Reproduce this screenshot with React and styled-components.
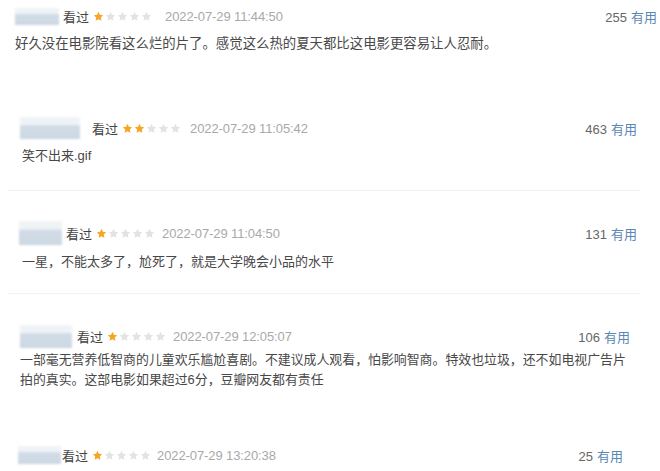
import styled, { createGlobalStyle } from "styled-components";

const GlobalStyle = createGlobalStyle`
  html, body {
    margin: 0;
    padding: 0;
    background: #fff;
  }
  body {
    font-family: "Liberation Sans", "Noto Sans CJK SC", sans-serif;
    width: 660px;
    height: 471px;
    overflow: hidden;
  }
`;

const List = styled.div`
  display: flex;
  flex-direction: column;
  width: 660px;
`;

const Card = styled.div`
  padding: ${(p) => p.$top}px ${(p) => p.$right}px ${(p) => p.$bottom}px ${(p) => p.$left}px;
  margin: 0 ${(p) => (p.$divider ? 20 : 0)}px 0 ${(p) => (p.$divider ? 8 : 0)}px;
  border-bottom: ${(p) => (p.$divider ? "1px solid #f2f3f4" : "none")};
`;

const Header = styled.div`
  display: flex;
  align-items: center;
  height: 20px;
  font-size: 13px;
`;

const Meta = styled.div`
  display: flex;
  align-items: center;
  flex: 1;
`;

// blurred-out user name
const NameBlur = styled.div`
  width: ${(p) => p.$w}px;
  height: ${(p) => p.$h}px;
  margin-right: ${(p) => p.$gap}px;
  background: linear-gradient(180deg, #eef2f6 0%, #eef2f6 35%, #cfdae5 36%, #c6d3e0 100%);
  filter: blur(1.2px);
  opacity: 0.9;
`;

const Watched = styled.span`
  color: #444;
  margin-right: 4px;
`;

const Stars = styled.span`
  display: inline-flex;
  gap: 1px;
  margin-right: ${(p) => p.$gap}px;
`;

const DateText = styled.span`
  color: #a9a9a9;
  letter-spacing: -0.1px;
`;

const Votes = styled.div`
  color: #666;
  white-space: nowrap;
`;

const Useful = styled.span`
  color: #5a87b4;
  margin-left: 4px;
`;

const Body = styled.p`
  margin: ${(p) => p.$gap}px 0 0 ${(p) => p.$indent}px;
  font-size: ${(p) => p.$size}px;
  line-height: 20px;
  color: #484848;
  white-space: nowrap;
`;

const Star = ({ on }) => (
  <svg width="11" height="11" viewBox="0 0 24 24">
    <path
      d="M12 1.8l3.1 6.6 7.1.9-5.2 4.9 1.3 7.1L12 17.8l-6.3 3.5 1.3-7.1-5.2-4.9 7.1-.9z"
      fill={on ? "#f5a623" : "#e3e3e3"}
    />
  </svg>
);

const reviews = [
  {
    left: 15, right: 3, top: 6, bottom: 0, gap: 8, indent: 0, size: 13.4,
    blur: { w: 44, h: 17, gap: 4 }, starGap: 13, rating: 1,
    date: "2022-07-29 11:44:50", votes: 255,
    lines: ["好久没在电影院看这么烂的片了。感觉这么热的夏天都比这电影更容易让人忍耐。"],
  },
  {
    left: 12, right: 3, top: 64, bottom: 24, gap: 8, indent: 2, size: 13, divider: true,
    blur: { w: 60, h: 22, gap: 12 }, starGap: 9, rating: 2,
    date: "2022-07-29 11:05:42", votes: 463,
    lines: ["笑不出来.gif"],
  },
  {
    left: 11, right: 3, top: 32, bottom: 21, gap: 9, indent: 3, size: 13, divider: true,
    blur: { w: 43, h: 24, gap: 4 }, starGap: 7, rating: 1,
    date: "2022-07-29 11:04:50", votes: 131,
    lines: ["一星，不能太多了，尬死了，就是大学晚会小品的水平"],
  },
  {
    left: 20, right: 30, top: 32, bottom: 0, gap: 4, indent: 0, size: 12.9,
    blur: { w: 52, h: 23, gap: 5 }, starGap: 7, rating: 1,
    date: "2022-07-29 12:05:07", votes: 106,
    lines: [
      "一部毫无营养低智商的儿童欢乐尴尬喜剧。不建议成人观看，怕影响智商。特效也垃圾，还不如电视广告片",
      "拍的真实。这部电影如果超过6分，豆瓣网友都有责任",
    ],
  },
  {
    left: 18, right: 37, top: 55, bottom: 0, gap: 8, indent: 0, size: 13,
    blur: { w: 43, h: 18, gap: 1 }, starGap: 6, rating: 1,
    date: "2022-07-29 13:20:38", votes: 25,
    lines: [],
  },
];

const Review = ({ r }) => (
  <Card $left={r.left} $right={r.right} $top={r.top} $bottom={r.bottom} $divider={r.divider}>
    <Header>
      <Meta>
        <NameBlur $w={r.blur.w} $h={r.blur.h} $gap={r.blur.gap} />
        <Watched>看过</Watched>
        <Stars $gap={r.starGap}>
          {[0, 1, 2, 3, 4].map((i) => (
            <Star key={i} on={i < r.rating} />
          ))}
        </Stars>
        <DateText>{r.date}</DateText>
      </Meta>
      <Votes>
        {r.votes}
        <Useful>有用</Useful>
      </Votes>
    </Header>
    {r.lines.length > 0 && (
      <Body $gap={r.gap} $indent={r.indent} $size={r.size}>
        {r.lines.map((l, i) => (
          <span key={i}>
            {l}
            {i < r.lines.length - 1 && <br />}
          </span>
        ))}
      </Body>
    )}
  </Card>
);

export default function App() {
  return (
    <>
      <GlobalStyle />
      <List>
        {reviews.map((r, i) => (
          <Review key={i} r={r} />
        ))}
      </List>
    </>
  );
}
